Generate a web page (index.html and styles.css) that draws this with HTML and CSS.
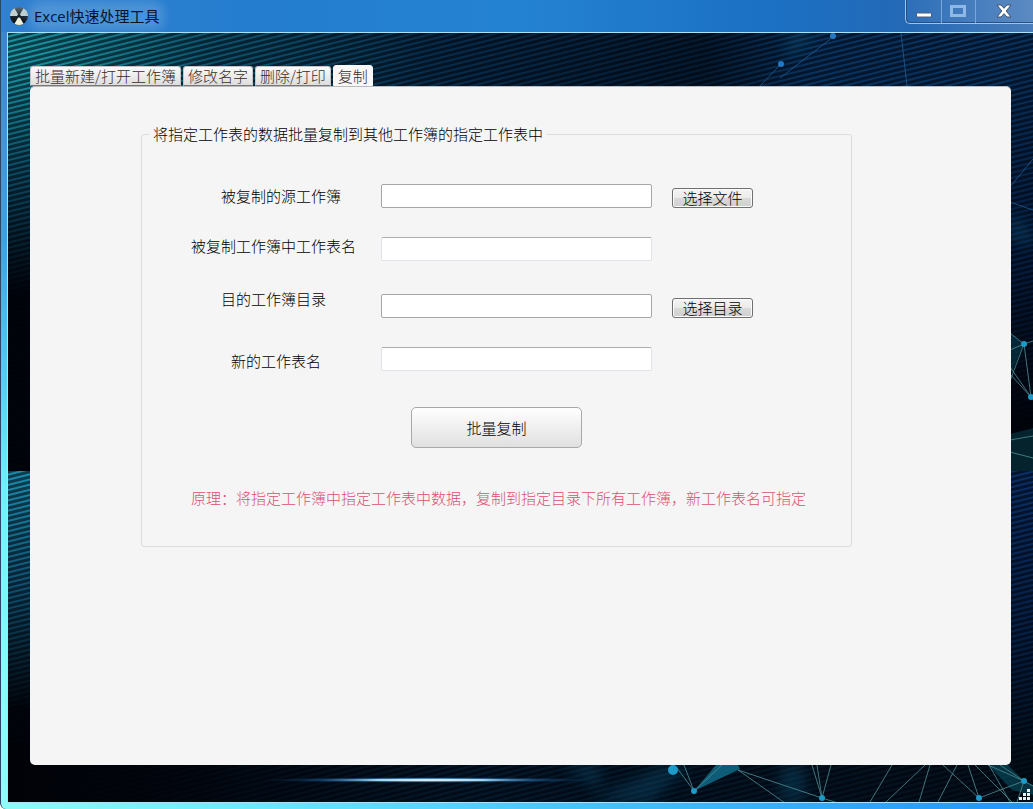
FILE: index.html
```html
<!DOCTYPE html>
<html lang="zh-CN">
<head>
<meta charset="utf-8">
<title>Excel快速处理工具</title>
<link rel="stylesheet" href="styles.css">
</head>
<body>
<div class="window">
  <header class="titlebar">
    <svg class="app-icon" viewBox="0 0 20 20" aria-hidden="true">
      <defs>
        <linearGradient id="ball" x1="0" y1="0" x2="0" y2="1">
          <stop offset="0" stop-color="#5c6c74"/><stop offset=".5" stop-color="#1c262e"/><stop offset="1" stop-color="#04080e"/>
        </linearGradient>
      </defs>
      <circle cx="10" cy="10" r="9" fill="url(#ball)"/>
      <path d="M10 10L1 10A9 9 0 0 1 5.500 2.200Z M10 10L14.500 2.200A9 9 0 0 1 19 10Z" fill="#c0d0ce"/>
      <path d="M10 10L14.500 17.800A9 9 0 0 1 5.500 17.800Z" fill="#eef2dc"/>
      <circle cx="10" cy="10" r="1.800" fill="#18242c"/>
    </svg>
    <h1 class="title">Excel快速处理工具</h1>
    <div class="controls">
      <button class="control" type="button" aria-label="最小化">
        <svg width="18" height="6" viewBox="0 0 18 6"><rect x="1.500" y="1" width="15" height="4" fill="#fff" stroke="#49617e"/></svg>
      </button>
      <button class="control" type="button" aria-label="最大化" disabled>
        <svg width="18" height="14" viewBox="0 0 18 14"><rect x="2.500" y="2.500" width="13" height="9" fill="none" stroke="#8fb8e6" stroke-width="3"/></svg>
      </button>
      <button class="control control-close" type="button" aria-label="关闭">
        <svg width="18" height="16" viewBox="0 0 18 16"><path d="M2 2H6L9 5.300L12 2H16L11.200 8L16 14H12L9 10.700L6 14H2L6.800 8Z" fill="#fff" stroke="#41536d"/></svg>
      </button>
    </div>
  </header>

  <main class="client">
    <svg class="network" viewBox="8 33 1025 769" preserveAspectRatio="xMaxYMax slice" aria-hidden="true">
      <defs>
        <radialGradient id="flare"><stop offset="0" stop-color="#fff"/><stop offset=".35" stop-color="#9fd3ef"/><stop offset=".65" stop-color="#1c5f96" stop-opacity=".6"/><stop offset="1" stop-color="#0a3158" stop-opacity="0"/></radialGradient>
        <filter id="soft" x="-50%" y="-50%" width="200%" height="200%"><feGaussianBlur stdDeviation="7"/></filter>
      </defs>
      <g fill="#0d5a80" opacity=".35" filter="url(#soft)">
        <path d="M590 802L665 765L690 765L650 802Z M780 765H805V802H780Z M562 765H600V790Z"/>
        <path d="M785 60L820 33H790Z M1010 210L1033 235V245L1010 240Z"/>
      </g>
      <ellipse cx="430" cy="780" rx="170" ry="3" fill="url(#flare)"/>
      <path d="M694 791L716 765H738L740 769Z" fill="#126f8f" opacity=".8"/>
      <path d="M988 765H1008L1024 781L1033 785V795L1012 790Z" fill="#0a5062" opacity=".6"/>
      <path d="M1010 434L1033 428V471H1010Z M1010 333L1024 344L1010 376Z" fill="#0c4c5c" opacity=".45"/>
      <g fill="none" stroke="#4d8f94" stroke-width="1" opacity=".8">
        <path d="M677 768L694 791L684 765M694 791L722 765M738 770L822 798L838 803M738 770L785 803M812 765L822 798L817 765M831 765L822 798M892 765L870 802M925 765L886 802M930 765L919 802M957 765L938 802M943 765L979 798L968 765M979 798L1024 781L988 765M975 765L1012 802M989 765L1010 802M1000 765L1024 781L1033 786M1024 781L1017 802"/>
        <path d="M1010 333L1024 344L1033 341M1010 350L1024 344L1010 381M1024 344L1031 397L1010 367M1010 374L1031 397M1010 440L1033 436M1010 452L1033 458"/>
      </g>
      <g fill="none" stroke="#255f94" stroke-width="1" opacity=".75">
        <path d="M780 78L833 37M760 86L781 64M901 33L907 86M1010 187L1033 159M1010 202L1033 210"/>
      </g>
      <g fill="#1d9ac8">
        <circle cx="673" cy="770" r="5"/><circle cx="694" cy="791" r="3"/><circle cx="822" cy="798" r="3"/><circle cx="979" cy="798" r="3"/><circle cx="1024" cy="781" r="3"/><circle cx="1024" cy="344" r="3"/><circle cx="1031" cy="397" r="3"/>
      </g>
      <g fill="#2479c5"><circle cx="781" cy="64" r="3"/><circle cx="833" cy="36" r="3"/></g>
    </svg>

    <div class="tabs" role="tablist">
      <button class="tab" type="button" role="tab">批量新建/打开工作簿</button>
      <button class="tab" type="button" role="tab">修改名字</button>
      <button class="tab" type="button" role="tab">删除/打印</button>
      <button class="tab tab-active" type="button" role="tab" aria-selected="true" aria-controls="copy-panel">复制</button>
    </div>

    <section class="panel" id="copy-panel" role="tabpanel" aria-label="复制">
      <form>
        <fieldset class="group">
          <legend class="group-title">将指定工作表的数据批量复制到其他工作簿的指定工作表中</legend>
          <div class="rows">
            <div class="row row-source">
              <label class="label indent" for="source">被复制的源工作簿</label>
              <input class="field field-strong" id="source" type="text">
              <button class="browse" type="button">选择文件</button>
            </div>
            <div class="row row-sheet">
              <label class="label" for="sheet">被复制工作簿中工作表名</label>
              <input class="field" id="sheet" type="text">
            </div>
            <div class="row row-target">
              <label class="label indent" for="target">目的工作簿目录</label>
              <input class="field field-strong" id="target" type="text">
              <button class="browse" type="button">选择目录</button>
            </div>
            <div class="row row-name">
              <label class="label indent-wide" for="name">新的工作表名</label>
              <input class="field" id="name" type="text">
            </div>
          </div>
          <button class="submit" type="button">批量复制</button>
          <p class="note">原理：将指定工作簿中指定工作表中数据，复制到指定目录下所有工作簿，新工作表名可指定</p>
        </fieldset>
      </form>
    </section>

    <svg class="grip" width="12" height="12" viewBox="0 0 12 12" aria-hidden="true">
      <path d="M8 0h3v3h-3z M4 4h3v3h-3z M8 4h3v3h-3z M0 8h3v3h-3z M4 8h3v3h-3z M8 8h3v3h-3z" fill="#e8f0f0"/>
    </svg>
  </main>
</div>
</body>
</html>
```
FILE: styles.css
```css
* { box-sizing: border-box; }

body {
  margin: 0;
  font: 300 15px/20px "Noto Sans CJK SC", sans-serif;
  color: #000;
}

button, input { font: inherit; color: inherit; }

.window {
  display: flex;
  flex-direction: column;
  min-height: 100vh;
  padding: 0 0 6px 6px;
  border-left: 1px solid #2a4668;
  border-bottom-left-radius: 6px;
  background:
    linear-gradient(90deg, #8ffcf8, #6de8fc 25%, #48c4fc 55%, #2492f8) bottom / 100% 7px no-repeat,
    linear-gradient(#3a80cc, #4594d8 18%, #3da2e2 30%, #52c8f2 45%, #6df0fa 60%, #86fdfa 85%, #8ffcf8);
}

.titlebar {
  display: flex;
  align-items: flex-start;
  height: 32px;
  margin-left: -6px;
  padding: 6px 0 0 8px;
  background: linear-gradient(90deg, #3280cf, #247dcf 25%, #2482d2 50%, #1b70c3 75%, #2469b6 88%, #4a7dba);
}

.app-icon { width: 20px; height: 20px; }

.title {
  margin: 0 0 0 5px;
  padding: 0;
  font: 400 15px/20px "Open Sans", "Noto Sans CJK SC", sans-serif;
  color: #06152c;
  border-radius: 8px;
  background: rgba(120, 175, 225, .4);
  box-shadow: 0 0 8px 5px rgba(120, 175, 225, .4);
}

.controls {
  display: flex;
  height: 24px;
  margin: -6px 0 0 auto;
  border: solid #9fc4ea;
  border-width: 0 0 1px 1px;
  border-bottom-left-radius: 5px;
  box-shadow: inset 1px -1px #245087;
  background: linear-gradient(90deg, rgba(255, 255, 255, .04), rgba(255, 255, 255, .1));
}

.control {
  display: flex;
  align-items: center;
  justify-content: center;
  width: 34px;
  padding: 0 2px 2px 0;
  border: 0;
  border-right: 1px solid #7ba7d8;
  background: none;
}

.control:first-child { padding: 6px 0 0; width: 36px; }

.control-close { width: 57px; border: 0; }

.client {
  position: relative;
  flex: 1;
  display: flex;
  flex-direction: column;
  padding: 32px 22px 37px;
  border: solid #a9e2fa;
  border-width: 1px 0 1px 1px;
  background:
    repeating-linear-gradient(166deg, rgba(0, 2, 10, .62) 0 2px, rgba(0, 2, 10, .1) 3px 4px, rgba(0, 2, 10, .62) 5px),
    radial-gradient(ellipse 420px 240px at 0 20px, #1cacb8, rgba(14, 96, 124, .8) 50%, transparent) no-repeat,
    linear-gradient(#1f9cc0, #125d80 45%, transparent) 0 438px / 22px 240px no-repeat,
    linear-gradient(#0a3868, #062044 30%, #01040c 50%, #010307 438px, #0c3470 438px, #062248 80%, #021019 95%) right / 22px 100% no-repeat,
    linear-gradient(90deg, #0b4c66, #082f50 45%, #051e36 68%, #0a3868 78%, #0a3868) 0 0 / 100% 60px no-repeat,
    linear-gradient(90deg, #010206, #02060e 15%, #051c30 45%, #04121e) bottom / 100% 60px no-repeat,
    linear-gradient(#082d4b, #01040c 30%, #010409);
}

.network {
  position: absolute;
  inset: 0;
  width: 100%;
  height: 100%;
}

.tabs {
  position: relative;
  display: flex;
  align-items: flex-end;
  gap: 2px;
  height: 21px;
}

.tab {
  height: 20px;
  padding: 0 4px;
  border: 1px solid #c4c4c4;
  border-bottom-color: #777;
  border-radius: 3px 3px 0 0;
  background: linear-gradient(#fafafa, #dedede);
  color: #3a2a26;
  line-height: 16px;
  white-space: nowrap;
}

.tab-active {
  height: 21px;
  border-color: #f7f7f7;
  background: #f7f7f7;
}

.panel {
  position: relative;
  flex: 1;
  padding: 37px 159px 80px 111px;
  border-top: 1px solid #bbb;
  border-radius: 5px;
  background: #f5f5f5;
}

.group {
  min-width: 0;
  margin: 0;
  padding: 40px 40px 38px 49px;
  border: 1px solid #dcdcdc;
  border-radius: 3px;
}

.group-title { margin-left: -42px; padding: 0 4px; }

.rows { display: grid; gap: 28px; }

.row {
  display: grid;
  grid-template-columns: 170px minmax(120px, 271px) 81px;
  column-gap: 20px;
  align-items: end;
}

.row-source .label { align-self: center; }
.row-sheet { height: 25px; }
.row-target { height: 29px; }
.row-name { height: 25px; }
.row-sheet .label, .row-target .label { align-self: start; }

.label { white-space: nowrap; }
.indent { padding-left: 30px; }
.indent-wide { padding-left: 40px; }

.field {
  width: 100%;
  height: 24px;
  padding: 0 4px;
  border: 1px solid #e2e3ea;
  border-top-color: #abadb3;
  border-radius: 2px;
  background: #fff;
}

.field-strong { border-color: #a6a6a6; }

.browse {
  height: 20px;
  padding: 0;
  border: 1px solid #707070;
  border-radius: 3px;
  background: linear-gradient(#f4f4f4, #ebebeb 50%, #dadada 50%, #cfcfcf);
  box-shadow: inset 0 0 0 1px #fafafa;
  line-height: 16px;
}

.submit {
  display: block;
  width: 171px;
  height: 41px;
  margin: 36px 0 40px 220px;
  border: 1px solid #a8a8a8;
  border-radius: 5px;
  background: linear-gradient(#fff, #e0e0e0);
}

.note { margin: 0; color: #dc5070; }

.grip { position: absolute; right: 2px; bottom: 1px; }
```
